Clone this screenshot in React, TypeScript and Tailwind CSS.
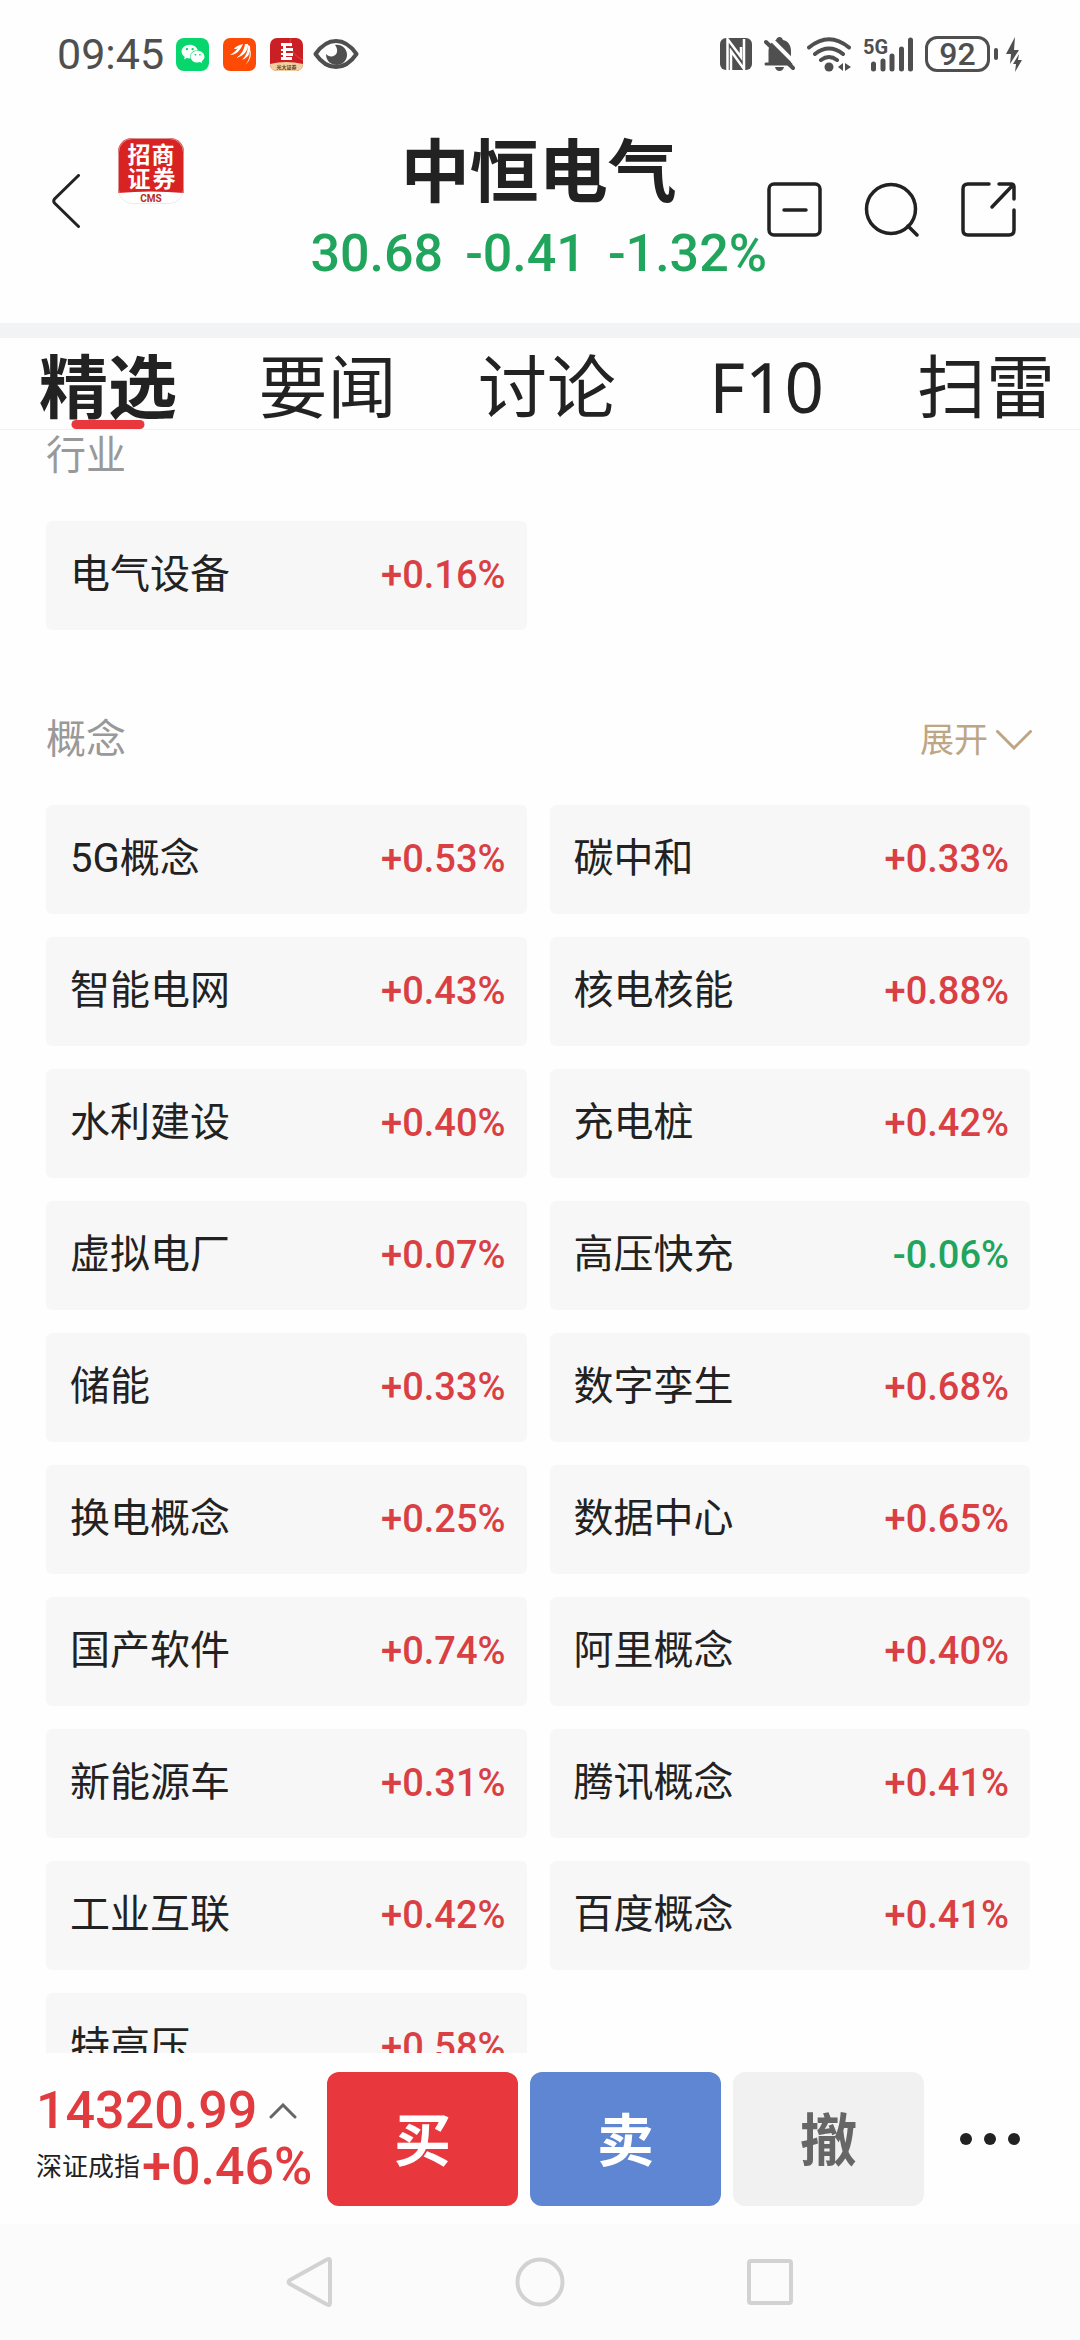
import { FaWeixin } from 'react-icons/fa';

type Sector = { name: string; change: string };

const industries: Sector[] = [{ name: '电气设备', change: '+0.16%' }];

const concepts: Sector[] = [
  { name: '5G概念', change: '+0.53%' },
  { name: '碳中和', change: '+0.33%' },
  { name: '智能电网', change: '+0.43%' },
  { name: '核电核能', change: '+0.88%' },
  { name: '水利建设', change: '+0.40%' },
  { name: '充电桩', change: '+0.42%' },
  { name: '虚拟电厂', change: '+0.07%' },
  { name: '高压快充', change: '-0.06%' },
  { name: '储能', change: '+0.33%' },
  { name: '数字孪生', change: '+0.68%' },
  { name: '换电概念', change: '+0.25%' },
  { name: '数据中心', change: '+0.65%' },
  { name: '国产软件', change: '+0.74%' },
  { name: '阿里概念', change: '+0.40%' },
  { name: '新能源车', change: '+0.31%' },
  { name: '腾讯概念', change: '+0.41%' },
  { name: '工业互联', change: '+0.42%' },
  { name: '百度概念', change: '+0.41%' },
  { name: '特高压', change: '+0.58%' },
];

const tabs = ['精选', '要闻', '讨论', 'F10', '扫雷'];

function StatusBar() {
  return (
    <div className="h-[108px] shrink-0 flex items-center justify-between pl-[57px] pr-[58px] text-[#4f4f4f]">
      <div className="flex items-center">
        <span className="text-[43px] leading-[44px] mr-3">09:45</span>
        <span className="w-[33px] h-[33px] rounded-lg bg-[#06d66c] flex items-center justify-center mr-3.5">
          <FaWeixin className="w-6 h-6 text-white" />
        </span>
        <svg className="w-[33px] h-[33px] mr-3.5" viewBox="0 0 33 33">
          <rect width="33" height="33" rx="7" fill="#fd4a04" />
          <path d="M7 17c6 0 10-4 13-11-5 1-8 3-9 5 2 0 3 0 4-1-2 3-5 5-8 7z" fill="#fff" />
          <path d="M13 20c5-3 8-8 9-14l3 0c0 7-4 12-12 14zM19 22c4-4 6-9 6-15l2 1c1 7-2 12-8 14zM22 27c4-4 5-9 5-16 2 7 0 12-5 16z" fill="#fff" />
        </svg>
        <svg className="w-[33px] h-[33px] mr-2.5" viewBox="0 0 33 33">
          <defs>
            <clipPath id="brokerIcon">
              <rect width="33" height="33" rx="7" />
            </clipPath>
          </defs>
          <g clipPath="url(#brokerIcon)">
            <rect width="33" height="33" fill="#c91f25" />
            <path d="M21 0c-3 8 2 18 12 22" stroke="#e0474a" fill="none" />
            <path d="M0 26q16-4 33 0v7H0z" fill="#f1cf9f" />
            <path d="M11 5h11v3h-6v2h7v3h-7v2h7v3h-7v1h6v3H11v-3h2v-2h-2v-2h2v-2h-2v-2h2V8h-2z" fill="#fff" />
            <text x="16.5" y="31" fontSize="5" fontWeight="700" textAnchor="middle" fill="#5b3218">光大证券</text>
          </g>
        </svg>
        <svg className="w-[46px] h-[32px]" viewBox="0 0 46 32">
          <path d="M2.500 16C8 8 15 3 23 3s15 5 20.500 13C38 24 31 29 23 29S8 24 2.500 16z" fill="none" stroke="currentColor" strokeWidth="4" strokeLinejoin="round" />
          <path d="M22 7c7-1 12 4 12 10s-5 10-10.500 10S13 23 13 16c3 4 10 3 11-2 .5-3-.5-5-2-7z" fill="currentColor" />
        </svg>
      </div>

      <div className="flex items-center">
        <svg className="w-[32px] h-[32px] mr-3" viewBox="0 0 32 32">
          <rect width="32" height="32" rx="6" fill="currentColor" />
          <path d="M7.500 32V1L21 19V9M11 32V13l13 18V1" stroke="#fefefe" strokeWidth="2.500" fill="none" />
        </svg>
        <svg className="w-[31px] h-[34px] mr-3" viewBox="0 0 31 34">
          <path d="M4.500 27V15C4.500 8 8 4 12 3q1-3 3.500-3T19 3c5 1 8 5 8 11v13z" fill="currentColor" />
          <path d="M2 27h25" stroke="currentColor" strokeWidth="3" strokeLinecap="round" />
          <path d="M11 30h9q-1 4-4.500 4T11 30z" fill="currentColor" />
          <path d="M6 1l25 25" stroke="#fefefe" strokeWidth="4" />
          <path d="M2 5l27 26" stroke="currentColor" strokeWidth="4" strokeLinecap="round" />
        </svg>
        <svg className="w-[44px] h-[35px] mr-3" viewBox="0 0 44 35">
          <g fill="none" stroke="currentColor" strokeWidth="4" strokeLinecap="round">
            <path d="M2 10.500Q22-6 42 10.500M8 17q14-11 28 0M14 23q8-6 16 0" />
          </g>
          <circle cx="22" cy="30" r="4.500" fill="currentColor" />
          <path d="M36 26v8l-5-4zM38 26v8l6-4z" fill="currentColor" />
        </svg>
        <svg className="w-[50px] h-[35px] mr-3 overflow-visible" viewBox="0 0 50 35">
          <text x="0" y="17" fontSize="20" fontWeight="700" fill="currentColor">5G</text>
          <path d="M10.500 27v5M20 24v8M29 19v13M38.500 12v20M47.500 3v29" stroke="currentColor" strokeWidth="5" strokeLinecap="round" />
        </svg>
        <span className="w-[65px] h-9 rounded-xl border-3 border-current flex items-center justify-center text-[32px] leading-8 font-medium">92</span>
        <span className="w-1 h-3 rounded-sm bg-current ml-1 mr-2" />
        <svg className="w-4 h-[35px]" viewBox="0 0 16 35">
          <path d="M9 0L0 17h5l-1 10 9-14H8zM13 17l-6 10h3l-1 8 7-12h-4z" fill="currentColor" />
        </svg>
      </div>
    </div>
  );
}

function StockHeader() {
  return (
    <header className="h-[215px] shrink-0 flex items-start pl-[52px] pr-16 text-[#222222]">
      <button aria-label="返回" className="mt-[66px]">
        <svg className="w-7 h-[54px]" viewBox="0 0 28 54">
          <path d="M26.500 1.500L2.500 25q-1.500 2 0 4l24 23.500" fill="none" stroke="currentColor" strokeWidth="3" strokeLinecap="round" />
        </svg>
      </button>
      <a href="#broker" aria-label="招商证券" className="mt-[30px] ml-[38px]">
        <svg className="w-[66px] h-[66px]" viewBox="0 0 66 66">
          <defs>
            <clipPath id="cmsLogo">
              <rect width="66" height="66" rx="14" />
            </clipPath>
          </defs>
          <g clipPath="url(#cmsLogo)">
            <rect width="66" height="66" fill="#fff" />
            <path d="M0 0h66v55q-33-3-66 0z" fill="#d92323" />
          </g>
          <rect x=".5" y=".5" width="65" height="65" rx="14" fill="none" stroke="#ddd" strokeOpacity=".6" />
          <g fill="#fff" fontSize="23" fontWeight="700" textAnchor="middle">
            <text x="21" y="25">招</text>
            <text x="45" y="25">商</text>
            <text x="21" y="49">证</text>
            <text x="46" y="49">券</text>
          </g>
          <text x="33" y="64" fontSize="10" fontWeight="700" textAnchor="middle" fill="#b92b20">CMS</text>
        </svg>
      </a>
      <div className="ml-auto mt-[30px] text-center">
        <h1 className="text-[69px] leading-[72px] font-bold">中恒电气</h1>
        <p className="mt-4 flex gap-[22px] text-[52px] leading-[56px] font-medium text-[#21a55d]">
          <span>30.68</span>
          <span>-0.41</span>
          <span>-1.32%</span>
        </p>
      </div>
      <div className="mt-[74px] flex gap-[42px]">
        <button aria-label="移除自选">
          <svg className="w-[55px] h-[55px]" viewBox="0 0 55 55" fill="none" stroke="currentColor" strokeWidth="3.500" strokeLinecap="round">
            <rect x="2" y="2" width="51" height="51" rx="5" />
            <path d="M17 28h22" />
          </svg>
        </button>
        <button aria-label="搜索">
          <svg className="w-[55px] h-[55px]" viewBox="0 0 55 55" fill="none" stroke="currentColor" strokeWidth="3.500" strokeLinecap="round">
            <circle cx="27" cy="27" r="24.500" />
            <path d="M44 44l9 9" />
          </svg>
        </button>
        <button aria-label="分享">
          <svg className="w-[55px] h-[55px]" viewBox="0 0 55 55" fill="none" stroke="currentColor" strokeWidth="3.500" strokeLinecap="round" strokeLinejoin="round">
            <path d="M28 2H7Q2 2 2 7v41q0 5 5 5h41q5 0 5-5V28M38 2h12q3 0 3 3v12M52 3L31 25" />
          </svg>
        </button>
      </div>
    </header>
  );
}

function SectorCard({ name, change }: Sector) {
  return (
    <a href="#sector" className="h-[109px] rounded-md bg-[#f7f7f7] pl-6 pr-[21px] pb-0.5 flex items-center justify-between text-[40px] leading-[44px] text-[#222222]">
      <span>{name}</span>
      <span className={change.startsWith('-') ? 'text-[38px] font-medium text-[#21a55d]' : 'text-[38px] font-medium text-[#d93f43]'}>
        {change}
      </span>
    </a>
  );
}

function BottomBar() {
  return (
    <div className="h-[171px] shrink-0 flex items-center gap-3 pl-9 pr-[60px]">
      <button className="w-[279px] text-left">
        <span className="flex items-center gap-3 text-[52px] leading-[56px] font-medium text-[#e03c40]">
          14320.99
          <svg className="w-7 h-4" viewBox="0 0 28 16">
            <path d="M2 14L14 2l12 12" fill="none" stroke="#666" strokeWidth="3" strokeLinecap="round" />
          </svg>
        </span>
        <span className="flex items-center gap-0.5 text-[52px] leading-[56px] font-medium text-[#e03c40]">
          <span className="shrink-0 text-[26px] font-normal text-[#222222]">深证成指</span>
          +0.46%
        </span>
      </button>
      <button className="flex-1 h-[134px] pt-1.5 rounded-xl bg-[#e8383d] text-white text-[57px] leading-[60px] font-bold">买</button>
      <button className="flex-1 h-[134px] pt-1.5 rounded-xl bg-[#5e86d3] text-white text-[57px] leading-[60px] font-bold">卖</button>
      <button className="flex-1 h-[134px] pt-1.5 rounded-xl bg-[#f1f1f1] text-[#666666] text-[57px] leading-[60px] font-bold">撤</button>
      <button aria-label="更多" className="ml-6 flex gap-3">
        <span className="w-3 h-3 rounded-full bg-[#222222]" />
        <span className="w-3 h-3 rounded-full bg-[#222222]" />
        <span className="w-3 h-3 rounded-full bg-[#222222]" />
      </button>
    </div>
  );
}

function SystemNav() {
  return (
    <nav className="h-[116px] shrink-0 bg-[#fbfbfb] flex items-center justify-center gap-[180px] text-[#d2d2d2]">
      <button aria-label="后退">
        <svg className="w-[50px] h-[50px]" viewBox="0 0 50 50" fill="none" stroke="currentColor" strokeWidth="4" strokeLinejoin="round">
          <path d="M42 2.500Q45 1 45 4v42q0 3-3 1.500L5 27q-3-2 0-4z" />
        </svg>
      </button>
      <button aria-label="主页">
        <svg className="w-[50px] h-[50px]" viewBox="0 0 50 50" fill="none" stroke="currentColor" strokeWidth="4">
          <circle cx="25" cy="25" r="22.500" />
        </svg>
      </button>
      <button aria-label="最近任务">
        <svg className="w-[50px] h-[50px]" viewBox="0 0 50 50" fill="none" stroke="currentColor" strokeWidth="4">
          <rect x="4" y="4" width="42" height="42" rx="2" />
        </svg>
      </button>
    </nav>
  );
}

export default function App() {
  return (
    <div className="h-screen flex flex-col overflow-hidden bg-[#fefefe] font-['Roboto','Noto_Sans_CJK_SC',sans-serif]">
      <StatusBar />
      <StockHeader />
      <div className="h-[15px] shrink-0 bg-[#f2f3f5]" />

      <nav className="h-[92px] shrink-0 flex justify-between border-b border-[#f0f0f0] pl-[39px] pr-[25px] text-[#222222] font-['Noto_Sans','Noto_Sans_CJK_SC',sans-serif]">
        {tabs.map((tab, i) => (
          <button key={tab} className="relative w-[138px] pt-1 text-[69px] leading-[88px] whitespace-nowrap">
            <span className={i === 0 ? 'font-bold' : ''}>{tab}</span>
            {i === 0 && <span className="absolute bottom-0 left-1/2 -translate-x-1/2 w-[73px] h-[9px] rounded-full bg-[#e8383d]" />}
          </button>
        ))}
      </nav>

      <main className="flex-1 min-h-0 overflow-hidden pl-[46px] pr-[50px]">
        <section>
          <h2 className="pt-0.5 text-[40px] leading-[48px] text-[#999999]">行业</h2>
          <div className="mt-[41px] grid grid-cols-2 gap-[23px]">
            {industries.map((item) => (
              <SectorCard key={item.name} {...item} />
            ))}
          </div>
        </section>

        <section className="mt-[86px]">
          <div className="flex items-center justify-between">
            <h2 className="text-[40px] leading-[48px] text-[#999999]">概念</h2>
            <button className="-mr-0.5 flex items-center gap-2 text-[34px] leading-[48px] text-[#bda685]">
              展开
              <svg className="w-9 h-5" viewBox="0 0 36 20">
                <path d="M1.500 1.500L18 18 34.500 1.500" fill="none" stroke="currentColor" strokeWidth="3" strokeLinecap="round" />
              </svg>
            </button>
          </div>
          <div className="mt-[41px] grid grid-cols-2 gap-[23px]">
            {concepts.map((item) => (
              <SectorCard key={item.name} {...item} />
            ))}
          </div>
        </section>
      </main>

      <BottomBar />
      <SystemNav />
    </div>
  );
}
